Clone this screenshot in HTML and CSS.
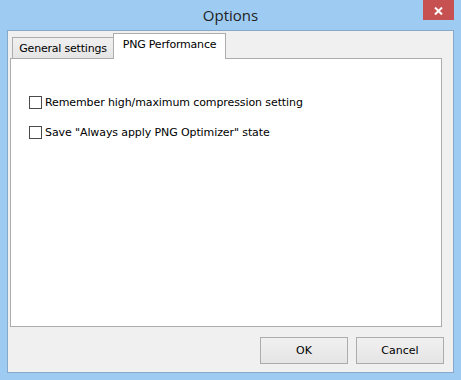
FILE: index.html
```
<!DOCTYPE html>
<html>
<head>
<meta charset="utf-8">
<link rel="stylesheet" href="styles.css">
</head>
<body>
<div class="window">
  <div class="titlebar">
    <span></span>
    <span class="title">Options</span>
    <span class="close"><svg width="9" height="8" viewBox="0 0 9 8"><path d="M1 0.5 L8 7.5 M8 0.5 L1 7.5" stroke="#fff" stroke-width="2"/></svg></span>
  </div>
  <div class="client">
    <div class="tabs">
      <div class="tab">General settings</div>
      <div class="tab active">PNG Performance</div>
    </div>
    <div class="panel">
      <label class="check"><span class="box"></span><span>Remember high/maximum compression setting</span></label>
      <label class="check"><span class="box"></span><span>Save "Always apply PNG Optimizer" state</span></label>
    </div>
    <div class="buttons">
      <button class="btn">OK</button>
      <button class="btn">Cancel</button>
    </div>
  </div>
</div>
</body>
</html>
```
FILE: styles.css
```
html, body { margin: 0; padding: 0; }
body { font-family: "DejaVu Sans", sans-serif; font-size: 11px; color: #000; }
.window {
  width: 461px; height: 380px; box-sizing: border-box;
  background: #9dcbf2; padding: 0 7px 7px 7px;
  display: flex; flex-direction: column;
}
.titlebar {
  height: 30px; display: grid; grid-template-columns: 1fr auto 1fr; align-items: start;
}
.title {
  font-family: "Open Sans", "Noto Sans", sans-serif; font-size: 15px; color: #222;
  line-height: 30px;
}
.close {
  justify-self: end; width: 31px; height: 20px; background: #c75050;
  display: flex; align-items: center; justify-content: center;
}
.close svg { display: block; margin-top: 1px; }
.client {
  flex: 1; background: #f0f0f0; border: 1px solid #85a8cb;
  padding: 2px 0 0 2px; display: flex; flex-direction: column;
}
.tabs { display: flex; align-items: flex-end; height: 25px; padding-left: 2px; }
.tab {
  height: 20px; width: 100px; box-sizing: content-box;
  border: 1px solid #acacac; border-bottom: none;
  background: linear-gradient(#f0f0f0, #e5e5e5);
  line-height: 22px; text-align: center; letter-spacing: -0.2px;
}
.tab.active {
  height: 25px; width: 111px; margin-left: -1px; margin-bottom: -1px;
  background: #fff; position: relative; z-index: 1; line-height: 22px;
}
.panel {
  margin-right: 11px; background: #fff; border: 1px solid #acacac;
  padding: 37px 0 0 18px; box-sizing: border-box; height: 269px;
  display: flex; flex-direction: column; gap: 17px;
}
.check { display: flex; align-items: center; gap: 3px; height: 13px; letter-spacing: -0.1px; }
.box { width: 11px; height: 11px; border: 1px solid #4a4a4a; background: #fff; flex: none; }
.buttons { display: flex; justify-content: flex-end; gap: 8px; padding: 10px 9px 0 0; }
.btn {
  width: 88px; height: 27px; border: 1px solid #acacac; background: linear-gradient(#f0f0f0, #e5e5e5);
  font-family: "DejaVu Sans", sans-serif; font-size: 11px; color: #000; padding: 0;
}
```
